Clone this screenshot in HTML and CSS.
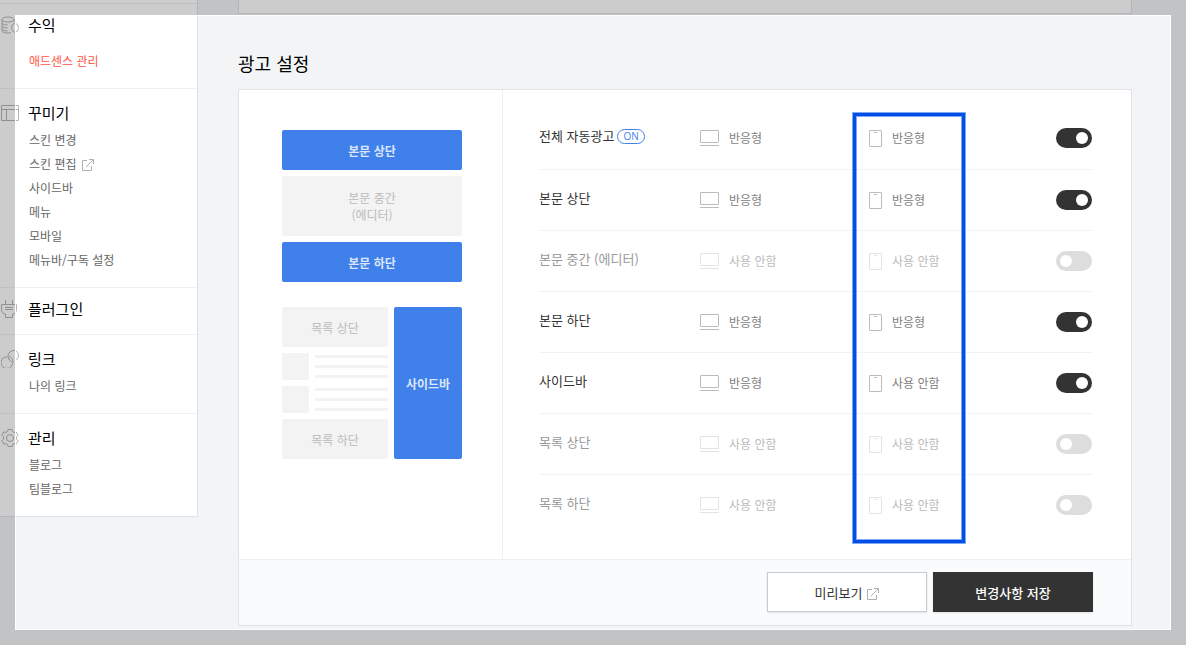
FILE: index.html
```html
<!DOCTYPE html>
<html lang="ko">
<head>
<meta charset="utf-8">
<title>광고 설정</title>
<link rel="stylesheet" href="styles.css">
</head>
<body>
<svg class="defs" aria-hidden="true">
  <symbol id="monitor" viewBox="0 0 19 16"><rect x=".5" y=".5" width="18" height="12" rx=".5"/><path d="M0 15.5h19"/></symbol>
  <symbol id="phone" viewBox="0 0 13 17"><rect x=".5" y=".5" width="12" height="16" rx=".5"/><path d="M5 2.5h3"/></symbol>
  <symbol id="external" viewBox="0 0 12 12"><path d="M5 1.5H.5v10h9V7M4 8l7-7M7 .5h4.500V5"/></symbol>
</svg>
<div class="layout">
  <nav class="sidebar">
    <div class="previous-section"></div>
    <section class="menu menu-revenue">
      <h2><svg class="menu-icon" viewBox="0 0 18 18"><ellipse cx="7" cy="3.500" rx="6" ry="2.500"/><path d="M1 3.500v3c0 1.500 2.500 2.500 5.500 2.500M13 3.500v2.500M1 6.500v3c0 1.500 2.500 2.500 5.500 2.500M1 9.500v3c0 1.500 2.500 2.500 5.500 2.500M1 12.500v2c0 1.500 3 2.500 6 2.500 1 0 2 0 3-.5"/><path d="M14 7a5 5 0 0 0 0 9.500M14 7a5 5 0 0 1 0 9.500"/></svg>수익</h2>
      <ul><li><a class="active" href="#">애드센스 관리</a></li></ul>
    </section>
    <section class="menu">
      <h2><svg class="menu-icon" viewBox="0 0 18 18"><path d="M.5 1.500h17v15H.5zM.5 5.500h17M5.500 5.500v11"/></svg>꾸미기</h2>
      <ul>
        <li><a href="#">스킨 변경</a></li>
        <li><a href="#">스킨 편집<svg class="external"><use href="#external"/></svg></a></li>
        <li><a href="#">사이드바</a></li>
        <li><a href="#">메뉴</a></li>
        <li><a href="#">모바일</a></li>
        <li><a href="#">메뉴바/구독 설정</a></li>
      </ul>
    </section>
    <section class="menu menu-single">
      <h2><svg class="menu-icon" viewBox="0 0 18 18"><path d="M4.500 0v4M11.500 0v4M.5 4.500h15v5c0 3-2 4.500-4 4.500v3.500h-7V14c-2 0-4-1.500-4-4.500zM4 7.500h8M4 9.500h8"/></svg>플러그인</h2>
    </section>
    <section class="menu">
      <h2><svg class="menu-icon" viewBox="0 0 18 18"><path d="M11 12C7 10 6 6 8 3a5.500 5.500 0 0 1 5-2.500c3 0 4.500 2.500 4.500 5s-1.500 4.500-3.500 5"/><path d="M8 6.500c4 1.500 5 5 3 8.500a5.700 5.700 0 1 1-5-8"/></svg>링크</h2>
      <ul><li><a href="#">나의 링크</a></li></ul>
    </section>
    <section class="menu">
      <h2><svg class="menu-icon" viewBox="0 0 18 18"><circle cx="9" cy="9" r="3.500"/><path d="M7 .5h4l.6 2.200 1.300.7 2.200-.6 2 3.400-1.600 1.600v2.400l1.600 1.600-2 3.400-2.200-.6-1.300.7-.6 2.200H7l-.6-2.200-1.300-.7-2.200.6-2-3.400 1.600-1.600V7.800L.9 6.200l2-3.400 2.200.6 1.300-.7z"/></svg>관리</h2>
      <ul>
        <li><a href="#">블로그</a></li>
        <li><a href="#">팀블로그</a></li>
      </ul>
    </section>
  </nav>

  <main class="content">
    <div class="previous-card"></div>
    <h1>광고 설정</h1>
    <form class="card">
      <div class="card-body">
        <div class="preview">
          <div class="slot on">본문 상단</div>
          <div class="slot tall">본문 중간<br>(에디터)</div>
          <div class="slot on">본문 하단</div>
          <div class="preview-list">
            <div class="list-column">
              <div class="slot">목록 상단</div>
              <div class="post"><i class="thumb"></i><div class="lines"><i></i><i></i><i></i></div></div>
              <div class="post"><i class="thumb"></i><div class="lines"><i></i><i></i><i></i></div></div>
              <div class="slot">목록 하단</div>
            </div>
            <div class="slot on side">사이드바</div>
          </div>
        </div>
        <div class="settings">
          <ul class="rows">
            <li class="row">
              <label class="name" for="ad-all">전체 자동광고<span class="badge">ON</span></label>
              <span class="device"><svg class="monitor"><use href="#monitor"/></svg>반응형</span>
              <span class="device"><svg class="phone"><use href="#phone"/></svg>반응형</span>
              <input class="toggle" type="checkbox" id="ad-all" checked>
            </li>
            <li class="row">
              <label class="name" for="ad-top">본문 상단</label>
              <span class="device"><svg class="monitor"><use href="#monitor"/></svg>반응형</span>
              <span class="device"><svg class="phone"><use href="#phone"/></svg>반응형</span>
              <input class="toggle" type="checkbox" id="ad-top" checked>
            </li>
            <li class="row off">
              <label class="name" for="ad-middle">본문 중간 (에디터)</label>
              <span class="device"><svg class="monitor"><use href="#monitor"/></svg>사용 안함</span>
              <span class="device"><svg class="phone"><use href="#phone"/></svg>사용 안함</span>
              <input class="toggle" type="checkbox" id="ad-middle">
            </li>
            <li class="row">
              <label class="name" for="ad-bottom">본문 하단</label>
              <span class="device"><svg class="monitor"><use href="#monitor"/></svg>반응형</span>
              <span class="device"><svg class="phone"><use href="#phone"/></svg>반응형</span>
              <input class="toggle" type="checkbox" id="ad-bottom" checked>
            </li>
            <li class="row">
              <label class="name" for="ad-side">사이드바</label>
              <span class="device"><svg class="monitor"><use href="#monitor"/></svg>반응형</span>
              <span class="device"><svg class="phone"><use href="#phone"/></svg>사용 안함</span>
              <input class="toggle" type="checkbox" id="ad-side" checked>
            </li>
            <li class="row off">
              <label class="name" for="ad-list-top">목록 상단</label>
              <span class="device"><svg class="monitor"><use href="#monitor"/></svg>사용 안함</span>
              <span class="device"><svg class="phone"><use href="#phone"/></svg>사용 안함</span>
              <input class="toggle" type="checkbox" id="ad-list-top">
            </li>
            <li class="row off">
              <label class="name" for="ad-list-bottom">목록 하단</label>
              <span class="device"><svg class="monitor"><use href="#monitor"/></svg>사용 안함</span>
              <span class="device"><svg class="phone"><use href="#phone"/></svg>사용 안함</span>
              <input class="toggle" type="checkbox" id="ad-list-bottom">
            </li>
          </ul>
          <div class="highlight"></div>
        </div>
      </div>
      <div class="card-footer">
        <button class="button" type="button">미리보기<svg class="external"><use href="#external"/></svg></button>
        <button class="button primary" type="submit">변경사항 저장</button>
      </div>
    </form>
  </main>
</div>
<div class="spotlight"></div>
</body>
</html>
```
FILE: styles.css
```css
* {
  box-sizing: border-box;
}

body {
  margin: 0;
  overflow: hidden;
  background: #f3f4f6;
  color: #333;
  font-family: "Noto Sans CJK KR", sans-serif;
  font-size: 12px;
  font-weight: 400;
}

h1,
h2,
ul {
  margin: 0;
  padding: 0;
  font-weight: 400;
  list-style: none;
}

svg {
  fill: none;
  stroke: currentColor;
}

.defs {
  position: absolute;
  width: 0;
  height: 0;
}

.layout {
  display: flex;
  align-items: flex-start;
}

/* Sidebar */

.sidebar {
  flex: 0 0 198px;
  background: #fff;
  border: solid #dde2ec;
  border-width: 0 1px 1px 0;
}

.previous-section {
  height: 3px;
}

.menu {
  padding: 12px 0 15px;
  border-top: 1px solid #f0f0f1;
}

.menu h2 {
  display: flex;
  align-items: center;
  gap: 9px;
  padding-left: 1px;
  color: #000;
  font-size: 15px;
  line-height: 24px;
}

.menu-icon {
  width: 18px;
  height: 18px;
  color: #b4b4b4;
}

.menu ul {
  padding: 3px 0 0 29px;
}

.menu li {
  line-height: 24px;
}

.menu a {
  color: #666;
  text-decoration: none;
}

.menu .active {
  color: #ff5544;
}

.menu-revenue {
  padding-top: 9px;
}

.menu-revenue ul {
  padding-top: 12px;
}

.menu-single {
  padding: 9px 0 13px;
}

.external {
  width: 12px;
  height: 12px;
  margin-left: 5px;
  color: #b0b0b0;
  vertical-align: -2px;
}

/* Main column */

.content {
  flex: 1;
  margin: 0 54px 0 40px;
}

.previous-card {
  height: 14px;
  background: #fff;
  border: solid #dfe3e9;
  border-width: 0 1px 1px;
}

h1 {
  padding: 35px 0 12px;
  color: #000;
  font-size: 18px;
  line-height: 28px;
}

.card {
  background: #fff;
  border: 1px solid #dfe3e9;
}

.card-body {
  display: flex;
}

.preview {
  flex: 0 0 264px;
  display: flex;
  flex-direction: column;
  gap: 6px;
  padding: 40px 40px 0 43px;
  border-right: 1px solid #f0f1f5;
}

.slot {
  display: flex;
  align-items: center;
  justify-content: center;
  height: 40px;
  border-radius: 2px;
  background: #f3f3f3;
  color: #bbb;
  line-height: 17px;
  text-align: center;
}

.slot.tall {
  height: 60px;
}

.slot.on {
  background: #3f80ea;
  color: #dce7fc;
  font-weight: 700;
}

.preview-list {
  display: flex;
  gap: 6px;
  padding-top: 19px;
}

.list-column {
  flex: 1;
  display: flex;
  flex-direction: column;
  gap: 6px;
}

.slot.side {
  width: 68px;
  height: auto;
}

.post {
  display: flex;
  gap: 6px;
}

.thumb {
  width: 27px;
  height: 27px;
  border-radius: 2px;
  background: #f3f3f3;
}

.lines {
  flex: 1;
  display: flex;
  flex-direction: column;
  gap: 7px;
  padding: 2px 0;
}

.lines i {
  height: 3px;
  background: #f3f3f3;
}

/* Ad rows */

.settings {
  position: relative;
  flex: 1;
  padding: 18px 39px 24px 36px;
}

.row {
  display: grid;
  grid-template-columns: 161px 169px 1fr 36px;
  align-items: start;
  padding: 20px 0;
  border-bottom: 1px solid #f2f2f2;
}

.row:first-child {
  padding-bottom: 21px;
}

.row:last-child {
  border-bottom: 0;
}

.name {
  display: flex;
  align-items: center;
  gap: 3px;
  font-size: 13px;
  line-height: 16px;
}

.badge {
  padding: 0 5px;
  border: 1px solid #3f80ea;
  border-radius: 8px;
  color: #3f80ea;
  font-family: "Open Sans", sans-serif;
  font-size: 10px;
  font-weight: 400;
  line-height: 13px;
}

.device {
  display: flex;
  align-items: center;
  gap: 10px;
  color: #808080;
  line-height: 20px;
}

.monitor {
  width: 19px;
  height: 16px;
  color: #bcbcbc;
}

.phone {
  width: 13px;
  height: 17px;
  color: #bcbcbc;
}

.off .name {
  color: #999;
}

.off .device {
  color: #bbb;
}

.off svg {
  color: #e3e3e3;
}

.toggle {
  appearance: none;
  display: flex;
  align-items: center;
  width: 36px;
  height: 20px;
  margin: 0;
  padding: 0 4px;
  border-radius: 10px;
  background: #ddd;
}

.toggle::before {
  width: 12px;
  height: 12px;
  border-radius: 50%;
  background: #fff;
  content: "";
}

.toggle:checked {
  justify-content: flex-end;
  background: #333;
}

.highlight {
  position: absolute;
  top: 23px;
  left: 350px;
  width: 112px;
  height: 430px;
  border: 3px solid #004fe6;
  box-shadow: 0 0 0 1px #80a7f2, inset 0 0 0 1px #80a7f2;
}

.card-footer {
  display: flex;
  justify-content: flex-end;
  gap: 6px;
  padding: 12px 38px 13px;
  border-top: 1px solid #eef0f4;
  background: #fafbfd;
}

.button {
  width: 160px;
  height: 40px;
  padding: 0;
  border: 1px solid #c4ccd6;
  background: #fff;
  box-shadow: 0 1px 2px rgba(0, 0, 0, 0.1);
  color: #333;
  font: inherit;
  font-size: 13px;
}

.button.primary {
  border-color: #333;
  background: #333;
  color: #fff;
  font-weight: 500;
}

/* Dimmed frame around the focused area */

.spotlight {
  position: fixed;
  inset: 15px;
  border: 1px solid #fff;
  box-shadow: 0 0 0 15px rgba(0, 0, 0, 0.2);
  pointer-events: none;
}
```
